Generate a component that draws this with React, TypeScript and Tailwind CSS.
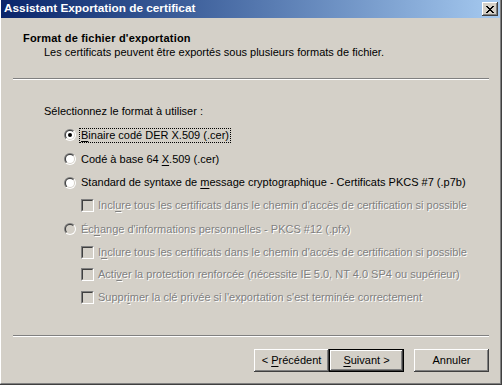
import type { ReactNode } from 'react'

const Mn = ({ children }: { children: ReactNode }) => (
  <span className="underline underline-offset-[2px]">{children}</span>
)

const Radio = ({ checked, disabled }: { checked?: boolean; disabled?: boolean }) => (
  <svg width="12" height="12" viewBox="0 0 12 12" className="shrink-0">
    <defs>
      <linearGradient id="ro" x1="0" y1="0" x2="1" y2="1">
        <stop offset="0.5" stopColor="#808080" />
        <stop offset="0.5" stopColor="#ffffff" />
      </linearGradient>
      <linearGradient id="ri" x1="0" y1="0" x2="1" y2="1">
        <stop offset="0.5" stopColor="#404040" />
        <stop offset="0.5" stopColor="#d4d0c8" />
      </linearGradient>
    </defs>
    <circle cx="6" cy="6" r="6" fill="url(#ro)" />
    <circle cx="6" cy="6" r="5" fill="url(#ri)" />
    <circle cx="6" cy="6" r="4" fill={disabled ? '#d4d0c8' : '#ffffff'} />
    {checked && <circle cx="6" cy="6" r="2" fill={disabled ? '#808080' : '#000000'} />}
  </svg>
)

const Checkbox = () => (
  <div className="size-[13px] shrink-0 border-t border-l border-t-[#808080] border-l-[#808080] border-b border-r border-b-white border-r-white">
    <div className="size-full border-t border-l border-t-[#404040] border-l-[#404040] border-b border-r border-b-[#d4d0c8] border-r-[#d4d0c8] bg-[#d4d0c8]" />
  </div>
)

const disabledText = 'text-[#808080] [text-shadow:1px_1px_0_#ffffff]'

const RadioRow = ({
  label,
  h,
  checked,
  disabled,
  focused,
}: {
  label: ReactNode
  h: string
  checked?: boolean
  disabled?: boolean
  focused?: boolean
}) => (
  <div className={`flex items-center pl-[63px] ${h}`}>
    <Radio checked={checked} disabled={disabled} />
    <span
      className={`ml-[3px] px-[1px] leading-[13px] border border-dotted ${
        focused ? 'border-black' : 'border-transparent'
      } ${disabled ? disabledText : ''}`}
    >
      {label}
    </span>
  </div>
)

const CheckRow = ({ label, h }: { label: ReactNode; h: string }) => (
  <div className={`flex items-center pl-[80px] ${h}`}>
    <Checkbox />
    <span className={`ml-[4px] leading-[13px] ${disabledText}`}>{label}</span>
  </div>
)

const Button = ({ children, isDefault }: { children: ReactNode; isDefault?: boolean }) => (
  <div className={`w-[75px] h-[23px] ${isDefault ? 'border border-black' : ''}`}>
    <div className="flex size-full items-center justify-center bg-[#d4d0c8] leading-[13px] shadow-[inset_-1px_-1px_#404040,inset_1px_1px_#ffffff,inset_-2px_-2px_#808080,inset_2px_2px_#d4d0c8]">
      <span>{children}</span>
    </div>
  </div>
)

const CloseButton = () => (
  <div className="flex h-[14px] w-[16px] items-center justify-center bg-[#d4d0c8] shadow-[inset_-1px_-1px_#404040,inset_1px_1px_#ffffff,inset_-2px_-2px_#808080,inset_2px_2px_#d4d0c8]">
    <svg width="8" height="7" viewBox="0 0 8 7" shapeRendering="crispEdges">
      <path
        d="M0 0h2v1H0zM6 0h2v1H6zM1 1h2v1H1zM5 1h2v1H5zM2 2h4v1H2zM3 3h2v1H3zM2 4h4v1H2zM1 5h2v1H1zM5 5h2v1H5zM0 6h2v1H0zM6 6h2v1H6z"
        fill="#000"
      />
    </svg>
  </div>
)

export default function App() {
  return (
    <div className="w-[502px] h-[385px] border-r border-b border-[#404040] font-['Liberation_Sans',Arial,sans-serif] text-[11px] text-black">
      <div className="flex size-full flex-col border-l border-l-white border-r border-b border-r-[#808080] border-b-[#808080] bg-[#d4d0c8]">
        {/* caption */}
        <div className="flex h-[18px] shrink-0 items-center justify-between bg-linear-to-r from-[#0a246a] to-[#a6caf0] pl-[3px] pr-[2px]">
          <span className="text-[11.8px] font-bold text-white">Assistant Exportation de certificat</span>
          <CloseButton />
        </div>

        <div className="flex flex-1 flex-col pt-[14px]">
          <div className="pl-[22px] font-bold leading-[13px] tracking-[0.2px]">Format de fichier d'exportation</div>
          <div className="mt-[1px] pl-[43px] leading-[13px]">
            Les certificats peuvent être exportés sous plusieurs formats de fichier.
          </div>

          <div className="mt-[19px] ml-[12px] mr-[11px] border-t border-b border-t-[#808080] border-b-white" />

          <div className="mt-[25px] pl-[43px] leading-[13px]">Sélectionnez le format à utiliser :</div>

          <div className="mt-[5px] flex flex-col">
            <RadioRow
              h="h-[24px]"
              checked
              focused
              label={
                <>
                  <Mn>B</Mn>inaire codé DER X.509 (.cer)
                </>
              }
            />
            <RadioRow
              h="h-[24px]"
              label={
                <>
                  Codé à base 64 <Mn>X</Mn>.509 (.cer)
                </>
              }
            />
            <RadioRow
              h="h-[23px]"
              label={
                <>
                  Standard de syntaxe de <Mn>m</Mn>essage cryptographique - Certificats PKCS #7 (.p7b)
                </>
              }
            />
            <CheckRow
              h="h-[23px]"
              label={
                <>
                  Incl<Mn>u</Mn>re tous les certificats dans le chemin d'accès de certification si possible
                </>
              }
            />
            <RadioRow
              h="h-[24px]"
              disabled
              label={
                <>
                  Éc<Mn>h</Mn>ange d'informations personnelles - PKCS #12 (.pfx)
                </>
              }
            />
            <CheckRow
              h="h-[22px]"
              label={
                <>
                  I<Mn>n</Mn>clure tous les certificats dans le chemin d'accès de certification si possible
                </>
              }
            />
            <CheckRow
              h="h-[23px]"
              label={
                <>
                  Acti<Mn>v</Mn>er la protection renforcée (nécessite IE 5.0, NT 4.0 SP4 ou supérieur)
                </>
              }
            />
            <CheckRow
              h="h-[23px]"
              label={
                <>
                  Suppr<Mn>i</Mn>mer la clé privée si l'exportation s'est terminée correctement
                </>
              }
            />
          </div>

          <div className="flex-1" />

          <div className="ml-[12px] mr-[11px] border-t border-b border-t-[#808080] border-b-white" />

          <div className="mt-[12px] mb-[11px] mr-[11px] flex justify-end">
            <Button>
              {'< '}
              <Mn>P</Mn>récédent
            </Button>
            <Button isDefault>
              <Mn>S</Mn>uivant {'>'}
            </Button>
            <div className="w-[10px]" />
            <Button>Annuler</Button>
          </div>
        </div>
      </div>
    </div>
  )
}
